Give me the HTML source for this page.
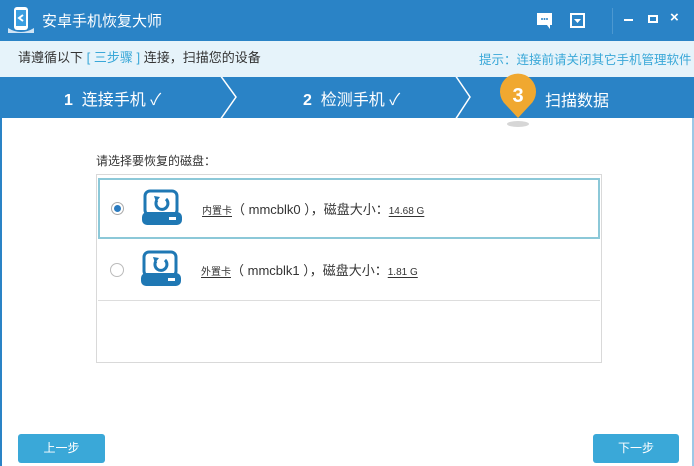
<!DOCTYPE html>
<html><head><meta charset="utf-8"><style>
*{margin:0;padding:0;box-sizing:border-box}
body{width:694px;height:466px;overflow:hidden;background:#fff;font-family:"Liberation Sans","Noto Sans CJK SC",sans-serif;position:relative}
.abs{position:absolute}
.title{left:0;top:0;width:694px;height:41px;background:#2a83c6;color:#fff}
.info{left:0;top:41px;width:694px;height:36px;background:#e6f3fa;font-size:13px;color:#333}
.steps{left:0;top:77px;width:694px;height:41px;background:#2a83c6;color:#fff;font-size:16px}
.btn{background:#3aa8d8;color:#fff;font-size:12px;text-align:center;line-height:28px;border-radius:3px;width:87px;height:29px;top:434px}
.row{left:98px;width:502px;height:61px;font-size:13px;color:#333}
u{text-underline-offset:2px}
</style></head><body>
<div class="abs" style="left:0;top:118px;width:2px;height:348px;background:#2a83c6"></div>
<div class="abs" style="left:692px;top:118px;width:2px;height:348px;background:#9cc8e6"></div>
<div class="abs title">
 <svg class="abs" style="left:6px;top:6px" width="30" height="30" viewBox="0 0 30 30"><path d="M2 22 Q15 30 28 22 L28 27 L2 27Z" fill="#cfe4f5"/><rect x="8" y="1" width="14" height="23" rx="3" fill="#fff"/><rect x="10" y="4" width="10" height="16" fill="#3b9ee0"/><path d="M17 9 L13 12 L17 15" stroke="#fff" stroke-width="2" fill="none"/></svg>
 <div class="abs" style="left:42px;top:10px;font-size:15px">安卓手机恢复大师</div>
 <svg class="abs" style="left:537px;top:13px" width="16" height="16"><rect x="0" y="0" width="15" height="12" fill="#fff"/><path d="M10 12 L13 16 L13 12Z" fill="#fff"/><circle cx="5" cy="6" r="1" fill="#2a83c6"/><circle cx="7.5" cy="6" r="1" fill="#2a83c6"/><circle cx="10" cy="6" r="1" fill="#2a83c6"/></svg>
 <svg class="abs" style="left:570px;top:13px" width="15" height="15"><rect x="1" y="1" width="13" height="13" fill="none" stroke="#fff" stroke-width="2"/><path d="M4 6 L11 6 L7.5 10Z" fill="#fff"/></svg>
 <div class="abs" style="left:612px;top:8px;width:1px;height:26px;background:#4c98d0"></div>
 <div class="abs" style="left:624px;top:19px;width:9px;height:2px;background:#fff"></div>
 <div class="abs" style="left:648px;top:15px;width:10px;height:8px;border:2px solid #fff"></div>
 <div class="abs" style="left:670px;top:9px;font-size:15px;font-weight:bold">×</div>
</div>
<div class="abs info">
 <div class="abs" style="left:18px;top:6px">请遵循以下 <span style="color:#3aa8d8">[ 三步骤 ]</span> 连接，扫描您的设备</div>
 <div class="abs" style="left:479px;top:8px;color:#3aa8d8;font-size:12.5px">提示：连接前请关闭其它手机管理软件</div>
</div>
<div class="abs steps">
 <div class="abs" style="left:64px;top:9px"><b>1</b>&nbsp; 连接手机 ✓</div>
 <div class="abs" style="left:303px;top:9px"><b>2</b>&nbsp; 检测手机 ✓</div>
 <div class="abs" style="left:545px;top:10px">扫描数据</div>
 <svg class="abs" style="left:0;top:0" width="694" height="41"><path d="M220 -2 L236 20 L220 43" stroke="#fff" stroke-width="1.5" fill="none"/><path d="M455 -2 L470 20 L455 43" stroke="#fff" stroke-width="1.5" fill="none"/></svg>
</div>
<svg class="abs" style="left:494px;top:70px" width="48" height="58"><path d="M24 48 L12 35 A18 18 0 1 1 36 35Z" fill="#f0a830"/><ellipse cx="24" cy="54" rx="11" ry="3" fill="#d6d6d6"/><text x="24" y="32" fill="#fff" font-size="20" text-anchor="middle" font-family="Liberation Sans" font-weight="bold">3</text></svg>
<div class="abs" style="left:96px;top:152px;font-size:12px;color:#333">请选择要恢复的磁盘：</div>
<div class="abs" style="left:96px;top:174px;width:506px;height:189px;border:1px solid #d9d9d9"></div>
<div class="abs row" style="top:178px;border:2px solid #8cc8d8;background:#fff">
 <div class="abs" style="left:11px;top:22px;width:13px;height:13px;border-radius:50%;border:1px solid #aaa;background:#fff"><div style="margin:2px;width:7px;height:7px;border-radius:50%;background:#2a7bbf"></div></div>
 <svg class="abs" style="left:42px;top:9px" width="40" height="38"><rect x="3" y="2" width="32" height="24" rx="5" fill="none" stroke="#1f78b4" stroke-width="3"/><rect x="0" y="23" width="40" height="13" rx="5" fill="#1f78b4"/><rect x="27" y="28" width="7" height="3" fill="#fff"/><path d="M24 10 A6 6 0 1 1 15 11" stroke="#1f78b4" stroke-width="3" fill="none"/><path d="M12 7 L18 8 L14 13Z" fill="#1f78b4"/></svg>
 <div class="abs" style="left:102px;top:19px"><u style="font-size:10px">内置卡</u>（ mmcblk0 ），磁盘大小：<u style="font-size:10px">14.68 G</u></div>
</div>
<div class="abs row" style="top:240px;border-bottom:1px solid #ddd">
 <div class="abs" style="left:12px;top:23px;width:14px;height:14px;border-radius:50%;border:1px solid #bbb"></div>
 <svg class="abs" style="left:43px;top:10px" width="40" height="38"><rect x="3" y="2" width="32" height="24" rx="5" fill="none" stroke="#1f78b4" stroke-width="3"/><rect x="0" y="23" width="40" height="13" rx="5" fill="#1f78b4"/><rect x="27" y="28" width="7" height="3" fill="#fff"/><path d="M24 10 A6 6 0 1 1 15 11" stroke="#1f78b4" stroke-width="3" fill="none"/><path d="M12 7 L18 8 L14 13Z" fill="#1f78b4"/></svg>
 <div class="abs" style="left:103px;top:20px"><u style="font-size:10px">外置卡</u>（ mmcblk1 ），磁盘大小：<u style="font-size:10px">1.81 G</u></div>
</div>
<div class="abs btn" style="left:18px">上一步</div>
<div class="abs btn" style="left:593px;width:86px">下一步</div>
</body></html>
